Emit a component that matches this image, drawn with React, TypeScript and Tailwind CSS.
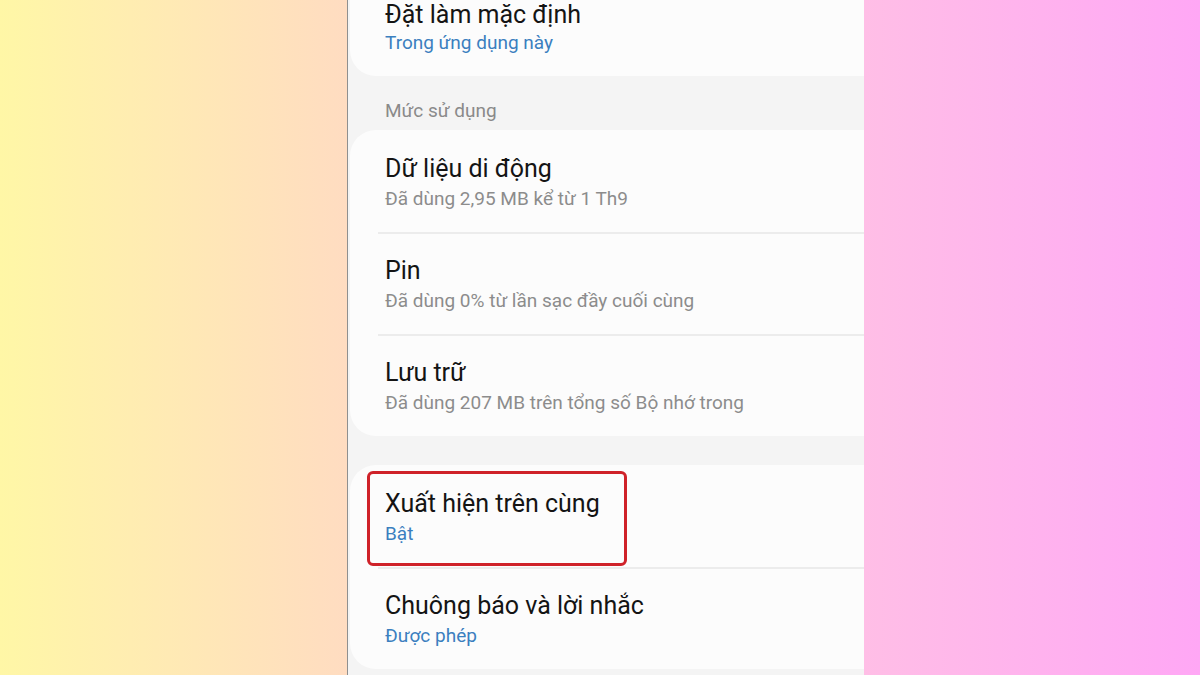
import React from "react";

type Item = { title: string; sub: string; blue?: boolean; highlight?: boolean };

const usage: Item[] = [
  { title: "Dữ liệu di động", sub: "Đã dùng 2,95 MB kể từ 1 Th9" },
  { title: "Pin", sub: "Đã dùng 0% từ lần sạc đầy cuối cùng" },
  { title: "Lưu trữ", sub: "Đã dùng 207 MB trên tổng số Bộ nhớ trong" },
];

const perms: Item[] = [
  { title: "Xuất hiện trên cùng", sub: "Bật", blue: true, highlight: true },
  { title: "Chuông báo và lời nhắc", sub: "Được phép", blue: true },
];

function Row({ item, last }: { item: Item; last: boolean }) {
  return (
    <div className="relative">
      <div className="pl-[35px] pt-[21px] pb-[21px]">
        <p className="text-[25px] leading-[32px] text-[#141414]">{item.title}</p>
        <p
          className={
            "mt-[2px] text-[19px] leading-[24px] " +
            (item.blue ? "text-[#3b7fbf]" : "text-[#8c8c8c]")
          }
        >
          {item.sub}
        </p>
      </div>
      {!last && <div className="ml-[28px] h-[2px] bg-[#ececec]" />}
      {item.highlight && (
        <div className="absolute left-[17px] top-[4px] h-[95px] w-[260px] rounded-[6px] border-[3px] border-[#cf2229]" />
      )}
    </div>
  );
}

function Card({ items }: { items: Item[] }) {
  return (
    <div className="ml-[2px] rounded-l-[26px] bg-[#fcfcfc] pt-[2px]">
      {items.map((it, i) => (
        <Row key={it.title} item={it} last={i === items.length - 1} />
      ))}
    </div>
  );
}

export default function App() {
  return (
    <div
      className="flex h-[675px] w-[1200px] overflow-hidden"
      style={{ fontFamily: "Roboto, 'Noto Sans', sans-serif" }}
    >
      <div className="w-[347px] bg-gradient-to-r from-[#fff7a6] to-[#ffdcc1]" />

      <div className="w-[517px] overflow-hidden border-l border-[#8f8f8f] bg-[#f4f4f4]">
        {/* top card, scrolled partly out of view */}
        <div className="-mt-[22px] ml-[2px] rounded-bl-[26px] bg-[#fcfcfc] pb-[21px] pl-[35px] pt-[21px]">
          <p className="text-[25px] leading-[32px] text-[#141414]">Đặt làm mặc định</p>
          <p className="text-[19px] leading-[24px] text-[#3b7fbf]">Trong ứng dụng này</p>
        </div>

        <p className="mt-[23px] pl-[37px] text-[19px] leading-[24px] text-[#8a8a8a]">Mức sử dụng</p>

        <div className="mt-[7px]">
          <Card items={usage} />
        </div>

        <div className="mt-[29px]">
          <Card items={perms} />
        </div>
      </div>

      <div className="flex-1 bg-gradient-to-r from-[#ffbee6] to-[#ffa7f5]" />
    </div>
  );
}
